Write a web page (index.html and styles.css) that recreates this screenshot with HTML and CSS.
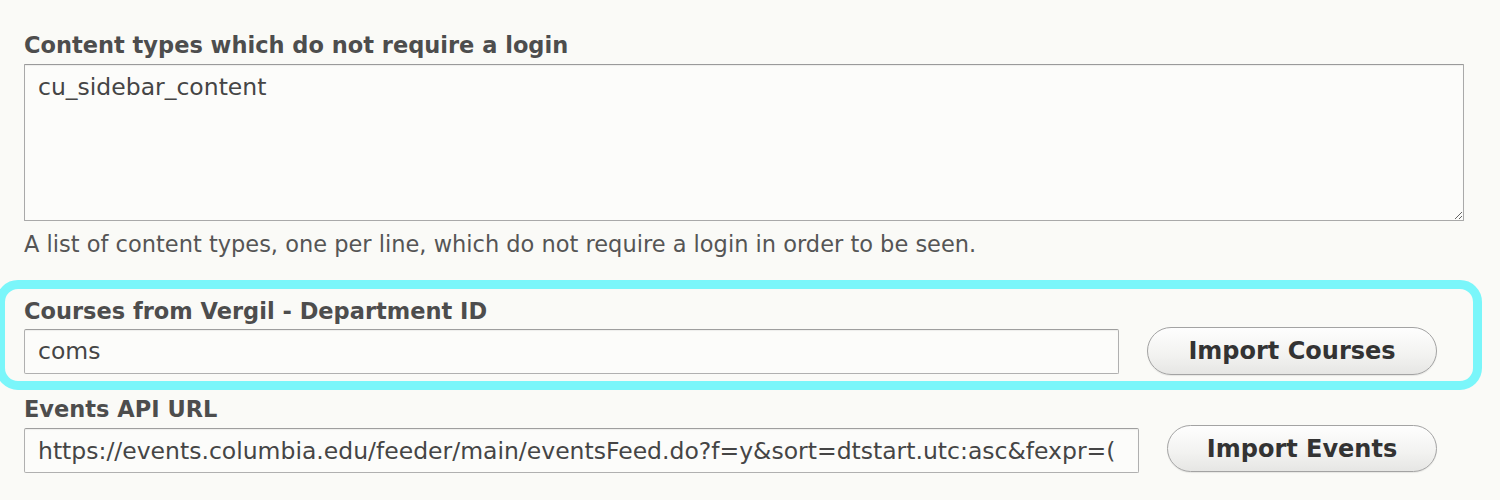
FILE: index.html
```html
<!DOCTYPE html>
<html>
<head>
<meta charset="utf-8">
<link rel="stylesheet" href="styles.css">
</head>
<body>
<div class="form">
  <div class="field field-textarea">
    <label class="label">Content types which do not require a login</label>
    <textarea class="textarea">cu_sidebar_content</textarea>
    <div class="desc">A list of content types, one per line, which do not require a login in order to be seen.</div>
  </div>

  <div class="highlight">
    <label class="label label-tight">Courses from Vergil - Department ID</label>
    <div class="row row-center">
      <input class="input input-courses" type="text" value="coms">
      <button class="btn btn-courses">Import Courses</button>
    </div>
  </div>

  <div class="field field-events">
    <label class="label label-tight">Events API URL</label>
    <div class="row row-top">
      <input class="input input-events" type="text" value="https://events.columbia.edu/feeder/main/eventsFeed.do?f=y&amp;sort=dtstart.utc:asc&amp;fexpr=(">
      <button class="btn btn-events">Import Events</button>
    </div>
  </div>
</div>
</body>
</html>
```

FILE: styles.css
```css
html, body {
  margin: 0;
  padding: 0;
  background: #fafaf7;
}
body {
  width: 1500px;
  height: 500px;
  overflow: hidden;
  font-family: "DejaVu Sans", "Liberation Sans", sans-serif;
  color: #4a4a4a;
}
.form {
  padding: 32px 0 0 24px;
}
.label {
  display: block;
  font-weight: bold;
  font-size: 22.5px;
  line-height: 26px;
  color: #4d4d4d;
  margin-bottom: 6px;
}
.label-tight {
  margin-bottom: 3px;
}
.textarea {
  box-sizing: border-box;
  display: block;
  width: 1440px;
  height: 157px;
  margin: 0;
  padding: 8px 13px;
  border: 1px solid #a9a9a9;
  border-top-color: #9a9a9a;
  border-radius: 1px;
  background: #fcfcfa;
  font-family: "DejaVu Sans", "Liberation Sans", sans-serif;
  font-size: 23.5px;
  line-height: 28px;
  color: #454545;
  resize: both;
  box-shadow: inset 0 1px 1px rgba(0,0,0,0.06);
}
.desc {
  font-size: 22.5px;
  line-height: 26px;
  margin-top: 10px;
  color: #555;
}
.highlight {
  margin: 23px 0 0 -28px;
  width: 1486px;
  box-sizing: border-box;
  border: 9px solid #7af6fa;
  border-radius: 22px;
  padding: 9px 0 6px 19px;
}
.row {
  display: flex;
  gap: 28px;
}
.row-center { align-items: center; }
.row-top { align-items: flex-start; }
.input {
  box-sizing: border-box;
  height: 45px;
  margin: 0;
  padding: 0 13px;
  border: 1px solid #b0b0b0;
  border-top-color: #9e9e9e;
  border-radius: 2px;
  background: #fcfcfa;
  font-family: "DejaVu Sans", "Liberation Sans", sans-serif;
  font-size: 23.5px;
  color: #454545;
  box-shadow: inset 0 1px 1px rgba(0,0,0,0.06);
}
.input-courses { width: 1095px; }
.input-events { width: 1115px; margin-top: 3px; }
.btn {
  box-sizing: border-box;
  height: 48px;
  margin: 0;
  border: 1px solid #a3a3a3;
  border-radius: 24px;
  background: linear-gradient(#fefefe, #f2f2f0 60%, #e6e6e4);
  font-family: "DejaVu Sans", "Liberation Sans", sans-serif;
  font-weight: bold;
  font-size: 24px;
  color: #333;
  padding: 0;
  box-shadow: 0 1px 1px rgba(0,0,0,0.08);
}
.btn-courses { width: 290px; }
.btn-events { width: 270px; height: 47px; }
.field-events {
  margin-top: 6px;
}
```
